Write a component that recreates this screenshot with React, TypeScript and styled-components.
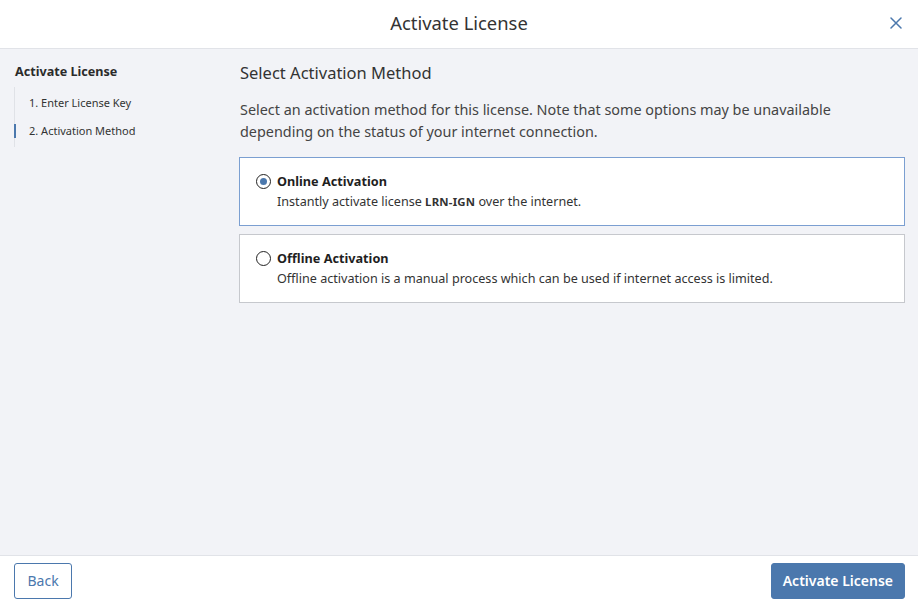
import React, { useState } from "react";
import styled, { createGlobalStyle } from "styled-components";

const Global = createGlobalStyle`
  html, body, #root { margin: 0; padding: 0; height: 100%; }
  body { font-family: "Noto Sans", "Open Sans", sans-serif; background: #f2f3f7; color: #333; }
  * { box-sizing: border-box; }
`;

const Page = styled.div`
  display: flex;
  flex-direction: column;
  height: 603px;
  width: 918px;
  background: #f2f3f7;
`;

const Header = styled.header`
  height: 49px;
  flex: none;
  background: #fff;
  border-bottom: 1px solid #e1e3e8;
  display: flex;
  align-items: center;
  justify-content: center;
  padding-bottom: 2px;
  position: relative;
`;

const Title = styled.h1`
  margin: 0;
  font-size: 18.4px;
  font-weight: 400;
  color: #333;
  line-height: 1;
`;

const Close = styled.button`
  position: absolute;
  right: 14px;
  top: 15px;
  width: 16px;
  height: 16px;
  padding: 0;
  border: 0;
  background: none;
  display: flex;
  align-items: center;
  justify-content: center;
  cursor: pointer;
`;

const Body = styled.div`
  flex: 1;
  display: flex;
  min-height: 0;
`;

const Sidebar = styled.nav`
  width: 239px;
  flex: none;
  padding: 15px 14px 0 14px;
`;

const SideTitle = styled.div`
  font-size: 12.6px;
  font-weight: 700;
  color: #2b2b2b;
  line-height: 16px;
  margin-left: 1px;
`;

const Steps = styled.ul`
  list-style: none;
  margin: 7px 0 0 0;
  padding: 2px 0;
  border-left: 1px solid #e0e2e7;
`;

const Step = styled.li<{ $active?: boolean }>`
  position: relative;
  font-size: 11px;
  line-height: 14px;
  color: #333;
  padding: 7px 0 7px 14px;
  &::before {
    content: "";
    position: absolute;
    left: -1px;
    top: 7px;
    width: 2px;
    height: 14px;
    background: ${(p) => (p.$active ? "#4b78ad" : "transparent")};
  }
`;

const Main = styled.main`
  flex: 1;
  padding: 14px 13px 0 0;
`;

const Heading = styled.h2`
  margin: 0 0 0 1px;
  font-size: 16.5px;
  font-weight: 400;
  color: #333;
  line-height: 20px;
`;

const Lead = styled.p`
  margin: 16px 0 14px 1px;
  font-size: 14.4px;
  line-height: 22px;
  color: #444;
`;

const Options = styled.div`
  display: flex;
  flex-direction: column;
  gap: 8px;
`;

const Card = styled.label<{ $selected?: boolean }>`
  display: flex;
  gap: 6px;
  height: 69px;
  padding: 14px 16px 0 16px;
  background: #fff;
  border: 1px solid ${(p) => (p.$selected ? "#7b9fd1" : "#c6c8cd")};
  cursor: pointer;
`;

const Radio = styled.span<{ $checked?: boolean }>`
  flex: none;
  width: 15px;
  height: 15px;
  margin-top: 2px;
  border-radius: 50%;
  border: 1px solid #222;
  background: #fff;
  display: flex;
  align-items: center;
  justify-content: center;
  &::after {
    content: "";
    width: 7px;
    height: 7px;
    border-radius: 50%;
    background: ${(p) => (p.$checked ? "#4b78ad" : "transparent")};
  }
`;

const CardText = styled.div`
  display: flex;
  flex-direction: column;
`;

const CardTitle = styled.div`
  font-size: 12.7px;
  font-weight: 700;
  color: #1f1f1f;
  line-height: 18px;
`;

const CardDesc = styled.div`
  font-size: 12.6px;
  line-height: 16px;
  color: #333;
  margin-top: 4px;
`;

const Code = styled.span`
  font-weight: 700;
  font-size: 11.4px;
  letter-spacing: 0.2px;
  color: #333;
`;

const Footer = styled.footer`
  height: 48px;
  flex: none;
  background: #fff;
  border-top: 1px solid #e1e3e8;
  display: flex;
  align-items: flex-start;
  justify-content: space-between;
  padding: 7px 13px 0 14px;
`;

const Button = styled.button<{ $primary?: boolean }>`
  height: 36px;
  padding: 0 ${(p) => (p.$primary ? "11px" : "12.5px")} 2px;
  border-radius: 3px;
  font-family: "Noto Sans", sans-serif;
  font-size: 14px;
  font-weight: ${(p) => (p.$primary ? 600 : 400)};
  color: ${(p) => (p.$primary ? "#fff" : "#4b78ad")};
  background: ${(p) => (p.$primary ? "#4b78ad" : "#fff")};
  border: 1px solid #4b78ad;
  cursor: pointer;
`;

export default function App() {
  const [method, setMethod] = useState<"online" | "offline">("online");
  return (
    <Page>
      <Global />
      <Header>
        <Title>Activate License</Title>
        <Close aria-label="Close">
          <svg width="12" height="12" viewBox="0 0 12 12">
            <path d="M1 1L11 11M11 1L1 11" stroke="#4b78ad" strokeWidth="1.5" strokeLinecap="round" />
          </svg>
        </Close>
      </Header>
      <Body>
        <Sidebar>
          <SideTitle>Activate License</SideTitle>
          <Steps>
            <Step>1. Enter License Key</Step>
            <Step $active>2. Activation Method</Step>
          </Steps>
        </Sidebar>
        <Main>
          <Heading>Select Activation Method</Heading>
          <Lead>
            Select an activation method for this license. Note that some options may be unavailable
            depending on the status of your internet connection.
          </Lead>
          <Options>
            <Card $selected={method === "online"} onClick={() => setMethod("online")}>
              <Radio $checked={method === "online"} />
              <CardText>
                <CardTitle>Online Activation</CardTitle>
                <CardDesc>
                  Instantly activate license <Code>LRN-IGN</Code> over the internet.
                </CardDesc>
              </CardText>
            </Card>
            <Card $selected={method === "offline"} onClick={() => setMethod("offline")}>
              <Radio $checked={method === "offline"} />
              <CardText>
                <CardTitle>Offline Activation</CardTitle>
                <CardDesc>
                  Offline activation is a manual process which can be used if internet access is limited.
                </CardDesc>
              </CardText>
            </Card>
          </Options>
        </Main>
      </Body>
      <Footer>
        <Button>Back</Button>
        <Button $primary>Activate License</Button>
      </Footer>
    </Page>
  );
}
